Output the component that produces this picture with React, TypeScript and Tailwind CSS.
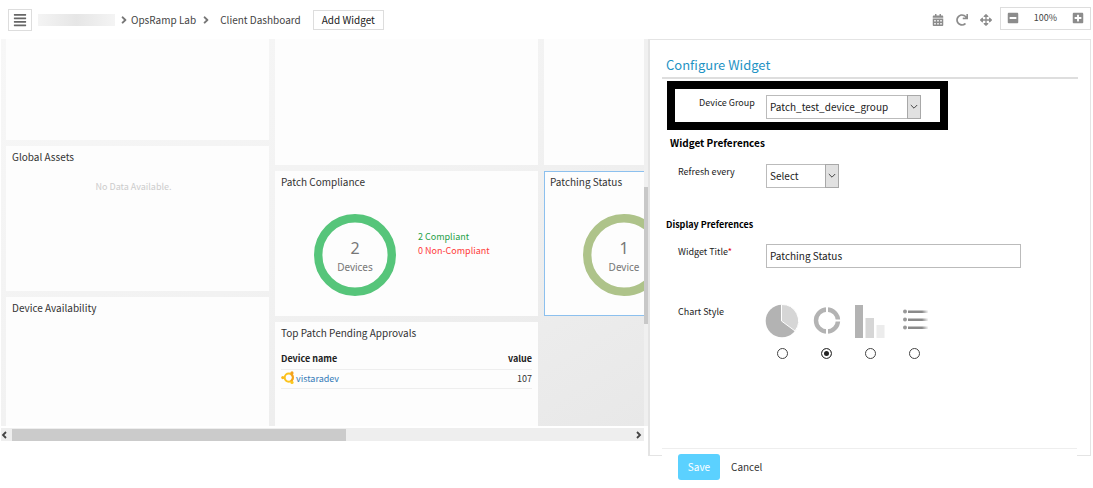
import { useState } from 'react';
import type { ReactNode } from 'react';
import {
  FaAlignJustify,
  FaAngleRight,
  FaArrowsAlt,
  FaCalendarAlt,
  FaMinusSquare,
  FaPlusSquare,
  FaRedo,
} from 'react-icons/fa';

export default function App() {
  return (
    <div className="bg-white font-['Noto_Sans_CJK_SC',sans-serif] text-[10px] leading-4 text-[#333]">
      <Toolbar />
      <main className="flex items-start pr-0.5 pl-px">
        <Dashboard />
        <ConfigurePanel />
      </main>
    </div>
  );
}

function Toolbar() {
  return (
    <header className="flex h-[39px] items-center pt-px pr-0.5 pl-2">
      <button
        aria-label="Menu"
        className="flex h-[22px] w-6 items-center justify-center border border-[#ddd] text-[#666]"
      >
        <FaAlignJustify size={14} />
      </button>
      <nav className="flex items-center text-[#444]">
        <span className="ml-1.5 h-3 w-[77px] bg-linear-to-r from-[#f4f4f4] via-[#e6e6e6] to-[#f4f4f4]" />
        <FaAngleRight size={12} className="ml-[3px] text-[#777]" />
        <a href="#lab" className="ml-px">
          OpsRamp Lab
        </a>
        <FaAngleRight size={12} className="ml-1 text-[#777]" />
        <a href="#dashboard" className="ml-2">
          Client Dashboard
        </a>
      </nav>
      <button className="ml-3 h-5 border border-[#ddd] px-2 text-[#222]">Add Widget</button>
      <div className="ml-auto flex items-center gap-3 text-[#8c8c8c]">
        <button aria-label="Schedule">
          <FaCalendarAlt size={12} />
        </button>
        <button aria-label="Refresh">
          <FaRedo size={12} />
        </button>
        <button aria-label="Full screen">
          <FaArrowsAlt size={12} />
        </button>
      </div>
      <div className="mb-1 ml-2 flex h-[23px] w-[91px] items-center justify-between border border-[#ddd] px-1.5 text-[#8c8c8c]">
        <button aria-label="Zoom out">
          <FaMinusSquare size={12} />
        </button>
        <span className="text-[9px] text-[#444]">100%</span>
        <button aria-label="Zoom in">
          <FaPlusSquare size={12} />
        </button>
      </div>
    </header>
  );
}

function Dashboard() {
  return (
    <section className="min-w-0 flex-1">
      <div className="flex">
        <div className="flex min-w-0 flex-1 gap-1.5 overflow-hidden bg-linear-to-br from-[#f7f7f7] via-[#f2f2f2] to-[#e8e8e8] pl-[5px]">
          <div className="flex w-[263px] shrink-0 flex-col gap-1.5">
            <div className="h-[101px] bg-[#fdfdfd]" />
            <Widget title="Global Assets" className="h-[145px]">
              <p className="mt-3.5 pr-2 text-center text-[9px] text-[#ccc]">No Data Available.</p>
            </Widget>
            <Widget title="Device Availability" className="h-[129px]" />
          </div>
          <div className="flex w-[263px] shrink-0 flex-col gap-1.5">
            <div className="h-[126px] bg-[#fdfdfd]" />
            <Widget title="Patch Compliance" className="h-[145px]">
              <div className="mt-6 ml-[33px] flex items-start">
                <Ring value={2} label="Devices" className="text-[#56c57a]" />
                <ul className="ml-[22px] pt-4 text-[9px] leading-[14px]">
                  <li className="text-[#1ea048]">2 Compliant</li>
                  <li className="text-[#ff3b3b]">0 Non-Compliant</li>
                </ul>
              </div>
            </Widget>
            <Widget title="Top Patch Pending Approvals" className="h-[104px]">
              <PatchTable />
            </Widget>
          </div>
          <div className="flex w-[263px] shrink-0 flex-col gap-1.5">
            <div className="h-[126px] bg-[#fdfdfd]" />
            <Widget title="Patching Status" className="h-[145px] outline -outline-offset-1 outline-[#8cc0ee]">
              <div className="mt-6 ml-[33px]">
                <Ring value={1} label="Device" className="text-[#aec38a]" />
              </div>
            </Widget>
          </div>
        </div>
        <div className="w-1 shrink-0 bg-[#f0f0f0] pt-[148px]">
          <div className="h-[137px] bg-[#c8c8c8]" />
        </div>
      </div>
      <div className="mt-0.5 mr-1 flex h-[13px] items-center bg-[#eee] text-[#444]">
        <ScrollArrow points="5,2 2,5 5,8" />
        <div className="ml-px h-3 w-[52%] bg-[#cbcbcb]" />
        <span className="ml-auto flex">
          <ScrollArrow points="3,2 6,5 3,8" />
        </span>
      </div>
    </section>
  );
}

function ScrollArrow({ points }: { points: string }) {
  return (
    <svg width="10" height="10" viewBox="0 0 10 10" className="shrink-0" fill="none" stroke="currentColor" strokeWidth="1.8">
      <polyline points={points} />
    </svg>
  );
}

function Widget({ title, className, children }: { title: string; className: string; children?: ReactNode }) {
  return (
    <article className={`bg-[#fdfdfd] px-1.5 pt-[3px] ${className}`}>
      <h3>{title}</h3>
      {children}
    </article>
  );
}

function Ring({ value, label, className }: { value: number; label: string; className: string }) {
  return (
    <div className="grid w-[82px] place-items-center font-['Noto_Sans',sans-serif]">
      <svg viewBox="0 0 82 82" className={`col-start-1 row-start-1 size-[82px] ${className}`}>
        <circle cx="41" cy="41" r="36.8" fill="none" stroke="currentColor" strokeWidth="8.4" />
      </svg>
      <div className="col-start-1 row-start-1 text-center text-[#777]">
        <div className="text-[16px] leading-6">{value}</div>
        <div className="leading-[14px]">{label}</div>
      </div>
    </div>
  );
}

function PatchTable() {
  return (
    <table className="mt-[9px] w-full text-[9px]">
      <thead>
        <tr className="h-[19px] border-b border-[#eee] text-[#222]">
          <th className="text-left font-bold">Device name</th>
          <th className="text-right font-bold">value</th>
        </tr>
      </thead>
      <tbody>
        <tr className="h-[19px] border-b border-[#eee]">
          <td>
            <a href="#vistaradev" className="flex items-center gap-px text-[#337ab7]">
              <UbuntuLogo />
              vistaradev
            </a>
          </td>
          <td className="text-right">107</td>
        </tr>
      </tbody>
    </table>
  );
}

function UbuntuLogo() {
  return (
    <svg width="14" height="16" viewBox="0 0 14 16" fill="none">
      <circle cx="7.8" cy="6.6" r="4.1" stroke="#fbc31e" strokeWidth="2" />
      <path d="M9.8 3A4.1 4.1 0 0 1 9.8 10.200" stroke="#f5a11c" strokeWidth="2" />
      <circle cx="1.8" cy="6.6" r="1.6" fill="#f9b81e" />
      <circle cx="11" cy="1.9" r="1.6" fill="#f5a11c" />
      <circle cx="11" cy="11.4" r="1.6" fill="#fbc81e" />
    </svg>
  );
}

const CHART_STYLES = [
  { id: 'pie', icon: <PieIcon /> },
  { id: 'donut', icon: <DonutIcon /> },
  { id: 'bar', icon: <BarIcon /> },
  { id: 'list', icon: <ListIcon /> },
];

function ConfigurePanel() {
  const [chartStyle, setChartStyle] = useState('donut');

  return (
    <aside className="w-[443px] shrink-0">
      <form id="configure" className="border border-l-2 border-[#e4e4e4] px-3 pb-24 text-[9px] text-[#222]">
        <h2 className="border-b-2 border-[#dedede] pt-[13px] pl-1 text-[13px] leading-6 text-[#1f93c4]">
          Configure Widget
        </h2>
        <div className="mt-0.5 ml-[5px] flex h-[49px] w-[281px] items-start border-8 border-black pt-1.5 pl-6">
          <label htmlFor="group" className="w-[67px]">
            Device Group
          </label>
          <Select id="group" option="Patch_test_device_group" className="w-[155px]" />
        </div>
        <h3 className="mt-[3px] pl-2 text-[10px] leading-5 font-bold text-black">Widget Preferences</h3>
        <Field id="refresh" label="Refresh every" className="mt-[11px]">
          <Select id="refresh" option="Select" className="w-[73px]" />
        </Field>
        <h3 className="mt-[27px] pl-1 leading-5 font-bold text-black">Display Preferences</h3>
        <Field id="title" label="Widget Title" required className="mt-[9px]">
          <input
            id="title"
            defaultValue="Patching Status"
            className="h-6 w-[255px] border border-[#bbb] px-[3px] pb-px text-[10px] outline-none"
          />
        </Field>
        <fieldset className="mt-9 grid grid-cols-[88px_1fr] items-start pl-4">
          <legend className="float-left contents">
            <span>Chart Style</span>
          </legend>
          <div className="flex gap-3">
            {CHART_STYLES.map(({ id, icon }) => (
              <label key={id} className="flex w-8 flex-col items-center gap-2.5">
                {icon}
                <input
                  type="radio"
                  name="chartStyle"
                  aria-label={id}
                  checked={chartStyle === id}
                  onChange={() => setChartStyle(id)}
                  className="size-[11px] appearance-none rounded-full border border-[#444] bg-white checked:bg-[#222] checked:shadow-[inset_0_0_0_2px_#fff]"
                />
              </label>
            ))}
          </div>
        </fieldset>
      </form>
      <footer className="relative mx-3.5 -mt-2 flex items-center border-t border-[#eee] bg-white pt-[5px] pb-2 pl-4">
        <button form="configure" type="button" className="h-[26px] w-[42px] rounded-[3px] bg-[#5bd1ff] text-white">
          Save
        </button>
        <button type="button" className="ml-[11px]">
          Cancel
        </button>
      </footer>
    </aside>
  );
}

function Field({
  id,
  label,
  required,
  className,
  children,
}: {
  id: string;
  label: string;
  required?: boolean;
  className: string;
  children: ReactNode;
}) {
  return (
    <div className={`grid grid-cols-[88px_1fr] items-start pl-4 ${className}`}>
      <label htmlFor={id}>
        {label}
        {required && <span className="text-red-600">*</span>}
      </label>
      {children}
    </div>
  );
}

function Select({ id, option, className }: { id: string; option: string; className: string }) {
  return (
    <div className={`relative h-6 ${className}`}>
      <select
        id={id}
        className="block size-full appearance-none border border-[#bbb] bg-white pr-4 pb-px pl-[3px] text-[10px] outline-none"
      >
        <option>{option}</option>
      </select>
      <span className="pointer-events-none absolute inset-y-0 right-0 flex w-3.5 items-center justify-center border border-[#a8a8a8] bg-[#e1e1e1]">
        <svg width="8" height="6" viewBox="0 0 8 6" className="shrink-0" fill="none" stroke="#444">
          <path d="M0.8 1l3.2 3.2L7.2 1" />
        </svg>
      </span>
    </div>
  );
}

function PieIcon() {
  return (
    <svg width="34" height="34" viewBox="0 0 34 34" className="shrink-0">
      <circle cx="17" cy="17" r="16.3" fill="#b3b3b3" />
      <path d="M16.5 0.5V17L30 27A16.4 16.4 0 0 0 16.5 0.5Z" fill="#d6d6d6" stroke="#fff" />
    </svg>
  );
}

function DonutIcon() {
  return (
    <svg width="34" height="34" viewBox="0 0 34 34" className="shrink-0">
      <circle cx="18" cy="16.5" r="11" fill="none" stroke="#b3b3b3" strokeWidth="4.4" />
      <path d="M18 2V10M18 23V32M25 16.5H32" stroke="#fff" strokeWidth="2" />
    </svg>
  );
}

function BarIcon() {
  return (
    <svg width="34" height="34" viewBox="0 0 34 34" className="shrink-0">
      <rect x="2" y="1" width="8" height="33" fill="#b3b3b3" />
      <rect x="12.5" y="14" width="8.5" height="20" fill="#d6d6d6" />
      <rect x="23.5" y="21" width="8" height="13" fill="#ececec" />
    </svg>
  );
}

function ListIcon() {
  return (
    <svg width="34" height="34" viewBox="0 0 34 34" className="shrink-0">
      <defs>
        <linearGradient id="fade" x1="0" x2="1">
          <stop offset="0.7" stopColor="#8a8a8a" />
          <stop offset="1" stopColor="#8a8a8a" stopOpacity="0.1" />
        </linearGradient>
      </defs>
      {[7.5, 15.5, 23.5].map((y) => (
        <g key={y}>
          <circle cx="8" cy={y} r="2" fill="#999" />
          <rect x="11" y={y - 1} width="20" height="2.5" fill="url(#fade)" />
        </g>
      ))}
    </svg>
  );
}
